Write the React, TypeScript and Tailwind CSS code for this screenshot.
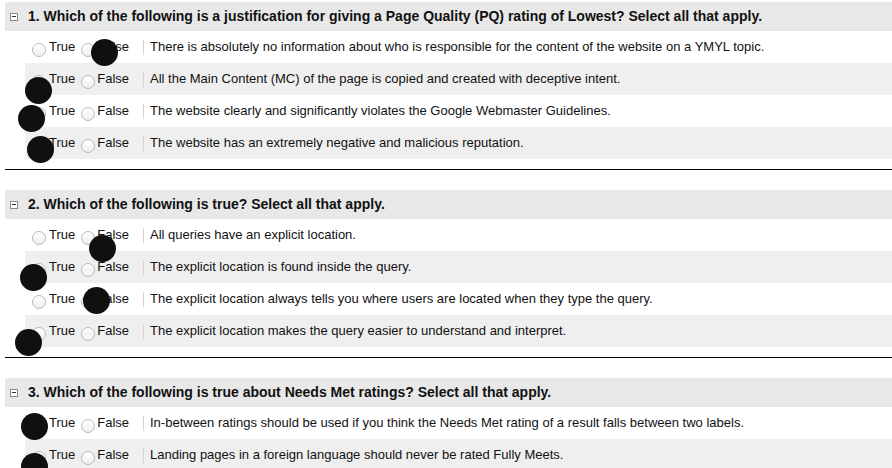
import React from "react";

const sections = [
  {
    title: "1. Which of the following is a justification for giving a Page Quality (PQ) rating of Lowest? Select all that apply.",
    items: [
      "There is absolutely no information about who is responsible for the content of the website on a YMYL topic.",
      "All the Main Content (MC) of the page is copied and created with deceptive intent.",
      "The website clearly and significantly violates the Google Webmaster Guidelines.",
      "The website has an extremely negative and malicious reputation.",
    ],
  },
  {
    title: "2. Which of the following is true? Select all that apply.",
    items: [
      "All queries have an explicit location.",
      "The explicit location is found inside the query.",
      "The explicit location always tells you where users are located when they type the query.",
      "The explicit location makes the query easier to understand and interpret.",
    ],
  },
  {
    title: "3. Which of the following is true about Needs Met ratings? Select all that apply.",
    items: [
      "In-between ratings should be used if you think the Needs Met rating of a result falls between two labels.",
      "Landing pages in a foreign language should never be rated Fully Meets.",
    ],
  },
];

// annotation marks (centre x, centre y)
const dots = [
  [104, 52], [38, 90], [31, 118], [40, 149],
  [102, 248], [33, 277], [96, 300], [28, 342],
  [34, 426], [34, 466],
];

const Radio = () => (
  <span className="block mt-[5px] w-[14px] h-[14px] rounded-full border border-[#b9b9b9] bg-gradient-to-b from-white to-[#f0f0f0] shrink-0" />
);

const Row = ({ text, shaded }: { text: string; shaded: boolean }) => (
  <div className={`ml-[25px] h-[32px] flex items-center text-[13px] text-[#111] ${shaded ? "bg-[#efefef]" : "bg-white"}`}>
    <div className="flex items-center pl-[7px] w-[118px]">
      <Radio />
      <span className="ml-[3px]">True</span>
      <span className="ml-[6px] flex"><Radio /></span>
      <span className="ml-[2px]">False</span>
    </div>
    <div className="w-px h-[15px] bg-[#d4d4d4]" />
    <span className="ml-[6px]">{text}</span>
  </div>
);

const Section = ({ title, items, last }: { title: string; items: string[]; last: boolean }) => (
  <div>
    <div className="ml-[5px] h-[29px] bg-[#e8e8e8] flex items-center">
      <span className="ml-[5px] w-[8px] h-[8px] border border-[#8a8a8a] bg-white flex items-center justify-center">
        <span className="w-[4px] h-px bg-[#333]" />
      </span>
      <span className="ml-[10px] font-bold text-[14px] text-[#111]">{title}</span>
    </div>
    {items.map((t, i) => (
      <Row key={i} text={t} shaded={i % 2 === 1} />
    ))}
    {!last && (
      <>
        <div className="mt-[10px] ml-[5px] h-px bg-black" />
        <div className="h-[20px]" />
      </>
    )}
  </div>
);

export default function App() {
  return (
    <div className="relative w-[892px] h-[468px] overflow-hidden bg-white pt-[2px] font-['Liberation_Sans',Arial,sans-serif]">
      {sections.map((s, i) => (
        <Section key={i} title={s.title} items={s.items} last={i === sections.length - 1} />
      ))}
      {dots.map(([x, y], i) => (
        <span
          key={i}
          className="absolute w-[27px] h-[27px] rounded-full bg-[#120f0f]"
          style={{ left: x - 13.5, top: y - 13.5 }}
        />
      ))}
    </div>
  );
}
